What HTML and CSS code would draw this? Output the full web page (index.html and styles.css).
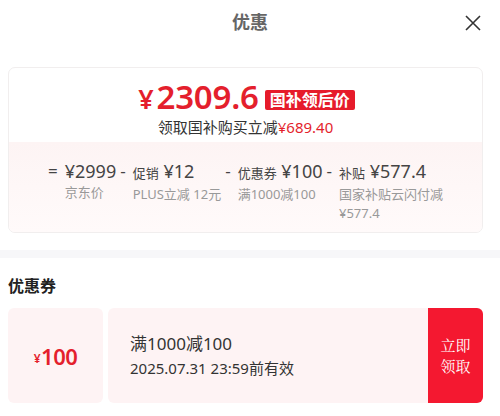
FILE: index.html
```html
<!DOCTYPE html>
<html lang="zh">
<head>
  <meta charset="UTF-8" />
  <title>优惠</title>
  <link rel="stylesheet" href="styles.css">
</head>
<body>
  <div class="header">
    <h2>优惠</h2>
    <span class="close">
      <svg width="16" height="16" viewBox="0 0 16 16"><path d="M1 1L15 15M15 1L1 15" stroke="#333" stroke-width="1.6" fill="none"/></svg>
    </span>
  </div>

  <div class="price-card">
    <div class="price-top">
      <div class="price-line">
        <span class="big-price"><span class="yen">¥</span>2309.6</span>
        <span class="badge">国补领后价</span>
      </div>
      <div class="save-line">领取国补购买立减<span class="red">¥689.40</span></div>
    </div>
    <div class="price-bottom">
      <div class="calc">
        <div class="calc-item">
          <span class="op">=</span>
          <div class="calc-col">
            <div class="val">¥2999</div>
            <div class="desc">京东价</div>
          </div>
        </div>
        <div class="calc-item">
          <span class="op">-</span>
          <div class="calc-col">
            <div class="val"><small>促销</small> ¥12</div>
            <div class="desc">PLUS立减 12元</div>
          </div>
        </div>
        <div class="calc-item">
          <span class="op">-</span>
          <div class="calc-col">
            <div class="val"><small>优惠券</small> ¥100</div>
            <div class="desc">满1000减100</div>
          </div>
        </div>
        <div class="calc-item">
          <span class="op">-</span>
          <div class="calc-col wide">
            <div class="val"><small>补贴</small> ¥577.4</div>
            <div class="desc">国家补贴云闪付减¥577.4</div>
          </div>
        </div>
      </div>
    </div>
  </div>

  <div class="band"></div>

  <div class="section">
    <h3>优惠券</h3>
    <div class="coupon">
      <div class="coupon-amount"><span class="yen-s">¥</span>100</div>
      <div class="coupon-info">
        <div class="rule">满1000减100</div>
        <div class="expire">2025.07.31 23:59前有效</div>
      </div>
      <div class="coupon-btn">立即<br>领取</div>
    </div>
  </div>
</body>
</html>
```

FILE: styles.css
```css
* {
  margin: 0;
  padding: 0;
  box-sizing: border-box;
}
body {
  font-family: 'Noto Sans', 'Noto Sans CJK SC', sans-serif;
  background: #fff;
  color: #333;
  width: 500px;
}
.header {
  height: 44px;
  display: flex;
  align-items: center;
  justify-content: center;
  position: relative;
}
.header h2 {
  font-size: 18px;
  font-weight: bold;
  color: #666;
  line-height: 24px;
}
.close {
  position: absolute;
  right: 19px;
  top: 14px;
  width: 16px;
  height: 16px;
}
.price-card {
  margin: 23px 17px 0 8px;
  border: 1px solid #f1eeee;
  border-radius: 7px;
  overflow: hidden;
  height: 166px;
  display: flex;
  flex-direction: column;
}
.price-top {
  padding-top: 12px;
  display: flex;
  flex-direction: column;
  align-items: center;
  height: 74px;
}
.price-line {
  display: flex;
  align-items: center;
  gap: 6px;
  height: 36px;
  padding-left: 2px;
}
.big-price {
  font-size: 33px;
  line-height: 36px;
  font-weight: 600;
  color: #e41f2d;
  letter-spacing: -0.2px;
}
.big-price .yen {
  font-size: 27px;
  margin-right: 3px;
}
.badge {
  background: #e61b2b;
  color: #fff;
  font-size: 16px;
  font-weight: bold;
  line-height: 20px;
  padding: 0 5px;
  border-radius: 2px;
  margin-top: 3px;
}
.save-line {
  font-size: 15px;
  line-height: 20px;
  color: #333;
  margin-top: 1px;
}
.red {
  color: #e41f2d;
}
.price-bottom {
  flex: 1;
  background: linear-gradient(#fdf4f4, #fffafa);
  padding-top: 18px;
}
.calc {
  display: flex;
  justify-content: center;
  gap: 4px;
  padding-left: 2px;
}
.calc-item {
  display: flex;
  gap: 7px;
}
.op {
  font-size: 17px;
  line-height: 22px;
  color: #444;
}
.calc-col {
  display: flex;
  flex-direction: column;
}
.calc-col.wide {
  width: 106px;
}
.val {
  font-size: 18px;
  line-height: 23px;
  color: #444;
  white-space: nowrap;
}
.val small {
  font-size: 13px;
}
.desc {
  font-size: 13px;
  line-height: 19px;
  color: #999;
}
.band {
  height: 8px;
  background: #f7f7f9;
  margin-top: 17px;
}
.section {
  padding: 16px 17px 0 8px;
}
.section h3 {
  font-size: 16px;
  font-weight: bold;
  color: #222;
  line-height: 24px;
}
.coupon {
  margin-top: 10px;
  height: 95px;
  display: flex;
  gap: 5px;
}
.coupon-amount {
  width: 95px;
  background: #fef3f4;
  border-radius: 6px;
  display: flex;
  align-items: center;
  justify-content: center;
  color: #e41f2d;
  font-size: 22px;
  font-weight: 600;
  letter-spacing: -0.5px;
}
.yen-s {
  font-size: 12px;
  margin-top: 5px;
  margin-right: 1px;
}
.coupon-info {
  flex: 1;
  background: #fef3f4;
  border-radius: 6px 0 0 6px;
  padding: 23px 0 0 22px;
  margin-right: -5px;
}
.rule {
  font-size: 17px;
  line-height: 25px;
  color: #333;
}
.expire {
  font-size: 15px;
  line-height: 24px;
  color: #333;
}
.coupon-btn {
  width: 55px;
  background: #f41830;
  border-radius: 0 6px 6px 0;
  color: #fff;
  font-family: 'Noto Serif CJK SC', 'Noto Sans CJK SC', serif;
  font-size: 15px;
  line-height: 21px;
  display: flex;
  align-items: center;
  justify-content: center;
  text-align: center;
  padding-bottom: 2px;
}
```
